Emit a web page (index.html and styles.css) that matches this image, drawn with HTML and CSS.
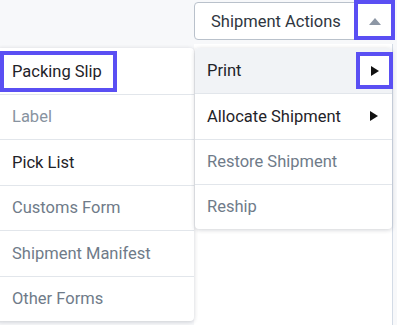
FILE: index.html
```html
<!DOCTYPE html>
<html>
<head>
<meta charset="utf-8">
<link rel="stylesheet" href="styles.css">
</head>
<body>
<div class="page">
  <div class="toolbar">
    <button class="actions-btn">
      <span class="btn-label">Shipment Actions</span>
      <span class="hl hl-caret"><span class="tri-up"></span></span>
    </button>
  </div>
  <div class="panel"></div>

  <ul class="menu menu-left">
    <li class="item item-dark"><span class="hl hl-packing"><span>Packing Slip</span></span></li>
    <li class="item item-light">Label</li>
    <li class="item item-dark">Pick List</li>
    <li class="item item-muted">Customs Form</li>
    <li class="item item-muted">Shipment Manifest</li>
    <li class="item item-muted">Other Forms</li>
  </ul>

  <ul class="menu menu-right">
    <li class="item item-dark item-active">Print<span class="hl hl-sub"><span class="tri-right"></span></span></li>
    <li class="item item-dark">Allocate Shipment<span class="tri-right tri-plain"></span></li>
    <li class="item item-muted">Restore Shipment</li>
    <li class="item item-muted">Reship</li>
  </ul>
</div>
</body>
</html>
```
FILE: styles.css
```css
html, body {
  margin: 0;
  padding: 0;
}
body {
  background: #f7f8fa;
  font-family: Roboto, "Liberation Sans", sans-serif;
  font-size: 16.5px;
  width: 397px;
  height: 325px;
  overflow: hidden;
}
.page {
  position: relative;
  width: 397px;
  height: 325px;
  overflow: hidden;
}
.toolbar {
  display: flex;
  justify-content: flex-end;
  padding: 2px 5px 0 0;
}
.actions-btn {
  position: relative;
  box-sizing: border-box;
  width: 198px;
  height: 38px;
  background: #fff;
  border: 1px solid #b9c1cb;
  border-radius: 4px;
  padding: 0 0 0 16px;
  text-align: left;
  font-family: inherit;
  font-size: 16.5px;
  color: #2f3640;
  display: flex;
  align-items: center;
}
.hl {
  position: absolute;
  box-sizing: border-box;
  border: 4px solid #5a4ff3;
  background: #fff;
  display: flex;
  align-items: center;
  justify-content: center;
}
.hl-caret {
  left: 159px;
  top: -3px;
  width: 41px;
  height: 40px;
}
.tri-up {
  width: 0;
  height: 0;
  border-left: 6px solid transparent;
  border-right: 6px solid transparent;
  border-bottom: 7px solid #8d97a5;
  margin-top: 2px;
}
.panel {
  position: absolute;
  left: 194px;
  top: 44px;
  width: 198px;
  height: 281px;
  background: #fff;
  border-right: 1px solid #d3dbe6;
}
.menu {
  position: absolute;
  list-style: none;
  margin: 0;
  padding: 0;
  background: #fff;
  border-radius: 4px;
  box-shadow: 0 1px 4px rgba(40, 50, 70, 0.22);
}
.menu-left {
  left: -4px;
  top: 48px;
  width: 198px;
}
.menu-right {
  left: 195px;
  top: 48px;
  width: 197px;
}
.item {
  position: relative;
  box-sizing: border-box;
  height: 45.5px;
  display: flex;
  align-items: center;
  padding-left: 12px;
  border-top: 1px solid #e2e6eb;
}
.menu-left .item {
  padding-left: 16px;
}
.item:first-child {
  border-top: none;
}
.menu-right .item {
  height: 45.25px;
}
.item-dark { color: #1f2329; }
.item-muted { color: #6f7b89; }
.item-light { color: #8893a0; }
.item-active {
  background: #f1f3f6;
  border-radius: 4px 4px 0 0;
}
.hl-packing {
  left: 4px;
  top: 3px;
  width: 117px;
  height: 41px;
  justify-content: flex-start;
  padding-left: 8px;
  color: #1f2329;
}
.hl-sub {
  left: 161px;
  top: 4px;
  width: 37px;
  height: 37px;
}
.tri-right {
  width: 0;
  height: 0;
  border-top: 5px solid transparent;
  border-bottom: 5px solid transparent;
  border-left: 8px solid #111;
}
.tri-plain {
  position: absolute;
  left: 175px;
  top: 50%;
  margin-top: -5px;
}
```
